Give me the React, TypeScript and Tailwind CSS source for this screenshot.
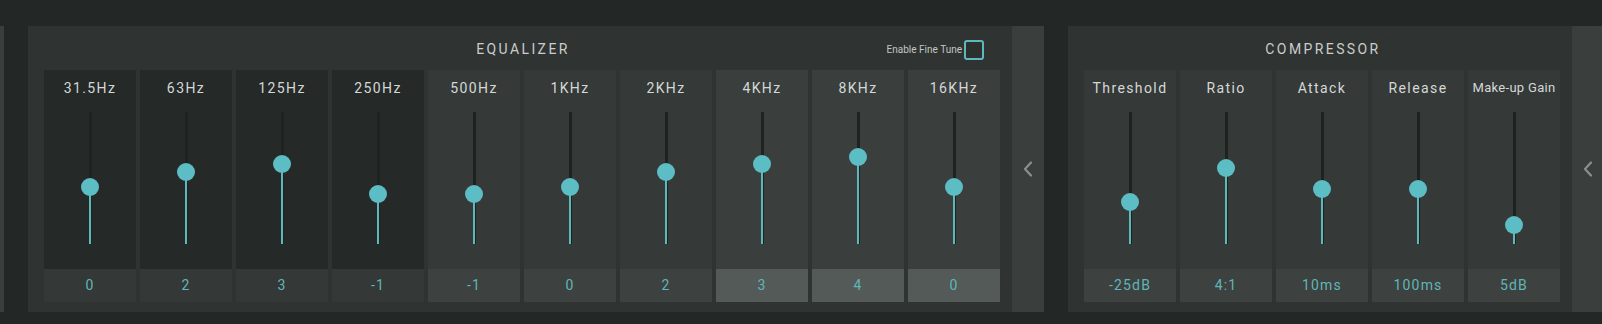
import React from "react";

type Band = { label: string; value: string; knob: number; tone: "dark" | "mid" | "light" };

// knob = centre of the handle, px from the top of the 132px track
const eqBands: Band[] = [
  { label: "31.5Hz", value: "0", knob: 74.7, tone: "dark" },
  { label: "63Hz", value: "2", knob: 59.7, tone: "dark" },
  { label: "125Hz", value: "3", knob: 52.2, tone: "dark" },
  { label: "250Hz", value: "-1", knob: 82.2, tone: "dark" },
  { label: "500Hz", value: "-1", knob: 82.2, tone: "mid" },
  { label: "1KHz", value: "0", knob: 74.7, tone: "mid" },
  { label: "2KHz", value: "2", knob: 59.7, tone: "mid" },
  { label: "4KHz", value: "3", knob: 52.2, tone: "light" },
  { label: "8KHz", value: "4", knob: 44.7, tone: "light" },
  { label: "16KHz", value: "0", knob: 74.7, tone: "light" },
];

const compBands: Band[] = [
  { label: "Threshold", value: "-25dB", knob: 90.3, tone: "mid" },
  { label: "Ratio", value: "4:1", knob: 55.7, tone: "mid" },
  { label: "Attack", value: "10ms", knob: 77.3, tone: "mid" },
  { label: "Release", value: "100ms", knob: 77.3, tone: "mid" },
  { label: "Make-up Gain", value: "5dB", knob: 113, tone: "mid" },
];

const toneStyles = {
  dark: { col: "bg-[#252928]", box: "bg-[#343837]" },
  mid: { col: "bg-[#353938]", box: "bg-[#3d4140]" },
  light: { col: "bg-[#3a3e3d]", box: "bg-[#535a58]" },
};

const TRACK = 132;

const Slider: React.FC<{ knob: number }> = ({ knob }) => (
  <div className="relative mt-[14px] h-[132px] w-[3px] bg-[#1e2221]">
    <div
      className="absolute bottom-0 left-0 w-[2px] bg-[#5cb8bc]"
      style={{ height: TRACK - knob }}
    />
    <div
      className="absolute left-1/2 h-[18px] w-[18px] -translate-x-1/2 rounded-full bg-[#5dbdc4]"
      style={{ top: knob - 9 }}
    />
  </div>
);

const BandColumn: React.FC<{ band: Band; tight?: boolean }> = ({ band, tight }) => {
  const tone = toneStyles[band.tone];
  return (
    <div className={`flex w-[92px] flex-col items-center ${tone.col}`}>
      <div
        className={`mt-[8px] h-[20px] leading-[20px] text-[#d4d8d7] whitespace-nowrap ${
          tight ? "text-[13px] tracking-[0.3px]" : "text-[14px] tracking-[1.4px]"
        }`}
      >
        {band.label}
      </div>
      <Slider knob={band.knob} />
      <div className="flex-1" />
      <div
        className={`flex h-[33px] w-full items-center justify-center text-[14px] tracking-[1.2px] text-[#5fb6b8] ${tone.box}`}
      >
        {band.value}
      </div>
    </div>
  );
};

const Chevron: React.FC = () => (
  <svg width="10" height="16" viewBox="0 0 10 16" fill="none">
    <polyline
      points="8,1.5 2,8 8,14.5"
      stroke="#8b908f"
      strokeWidth="2.2"
      strokeLinecap="round"
      strokeLinejoin="round"
    />
  </svg>
);

const Strip: React.FC<{ width: string; arrow?: boolean }> = ({ width, arrow }) => (
  <div className={`flex shrink-0 items-center justify-center bg-[#3a3e3d] ${width}`}>
    {arrow && <Chevron />}
  </div>
);

const App: React.FC = () => {
  return (
    <div
      className="h-[324px] w-full overflow-hidden bg-[#232726] pt-[26px]"
      style={{ fontFamily: "Roboto, 'Noto Sans', sans-serif" }}
    >
      <div className="flex h-[286px] gap-6">
        <Strip width="w-[4px]" />

        {/* Equalizer */}
        <div className="flex shrink-0">
          <div className="flex w-[984px] flex-col bg-[#2f3332] pl-4 pr-3 pb-[10px]">
            <div className="grid h-[44px] grid-cols-[1fr_auto_1fr] items-center pt-[3px]">
              <div />
              <div className="pl-[2px] text-[14px] tracking-[2.4px] text-[#c9cdcc]">EQUALIZER</div>
              <div className="flex items-center justify-end gap-[2px] pr-4">
                <span className="text-[10px] text-[#c3c7c6]">Enable Fine Tune</span>
                <span className="h-[20px] w-[20px] rounded-[3px] border-2 border-[#5fb8bd] bg-[#2b2f2e]" />
              </div>
            </div>
            <div className="flex flex-1 gap-1">
              {eqBands.map((b) => (
                <BandColumn key={b.label} band={b} />
              ))}
            </div>
          </div>
          <Strip width="w-[32px]" arrow />
        </div>

        {/* Compressor */}
        <div className="flex shrink-0">
          <div className="flex w-[504px] flex-col bg-[#2f3332] pl-4 pr-3 pb-[10px]">
            <div className="flex h-[44px] items-center justify-center pl-[2px] pt-[3px] text-[14px] tracking-[2.4px] text-[#c9cdcc]">
              COMPRESSOR
            </div>
            <div className="flex flex-1 gap-1">
              {compBands.map((b) => (
                <BandColumn key={b.label} band={b} tight={b.label === "Make-up Gain"} />
              ))}
            </div>
          </div>
          <Strip width="w-[32px]" arrow />
        </div>
      </div>
    </div>
  );
};

export default App;
